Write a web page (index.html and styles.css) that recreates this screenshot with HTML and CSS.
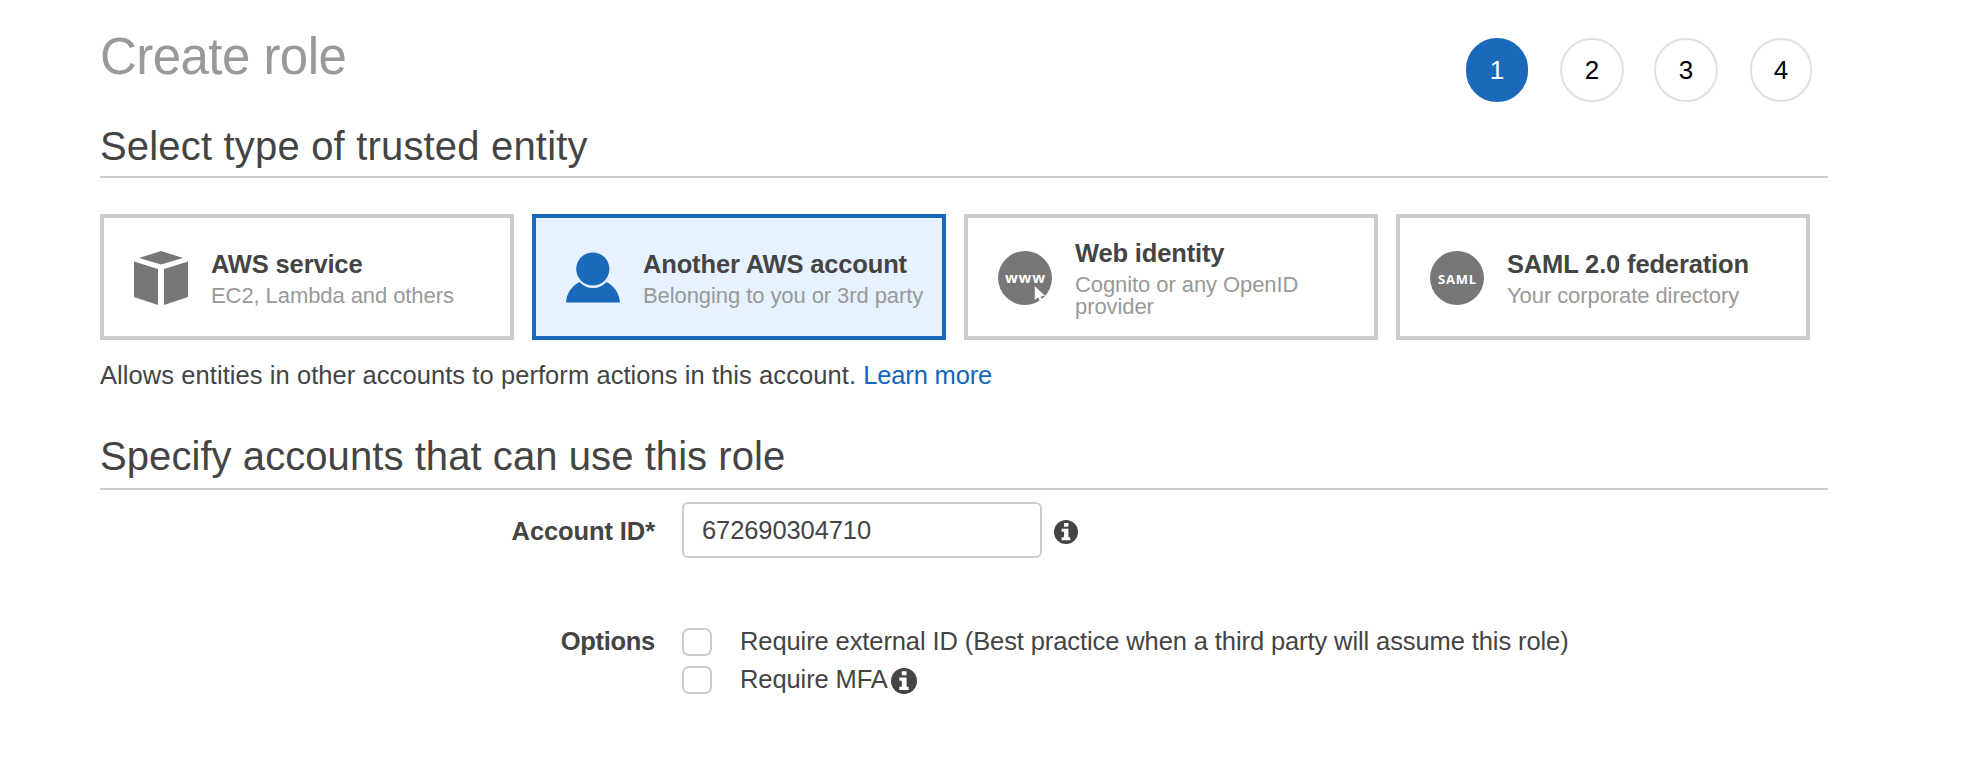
FILE: index.html
```html
<!DOCTYPE html>
<html lang="en">
<head>
<meta charset="utf-8">
<title>Create role</title>
<link rel="stylesheet" href="styles.css">
</head>
<body>
<svg class="defs" width="0" height="0" aria-hidden="true">
  <symbol id="info" viewBox="0 0 26 26">
    <circle cx="13" cy="13" r="13" fill="#444"/>
    <path fill="#fff" d="M10.800 3.200h4.800v4h-4.800zM8.300 9.400h7.300v9.300h2v3.300H8.300v-3.300h2.500v-6H8.300z"/>
  </symbol>
</svg>
<main class="wizard">
  <header class="header">
    <h1 class="title">Create role</h1>
    <ol class="steps">
      <li class="step step-active">1</li>
      <li class="step step-wide">2</li>
      <li class="step step-wide">3</li>
      <li class="step step-last">4</li>
    </ol>
  </header>

  <h2 class="section-title">Select type of trusted entity</h2>
  <div class="cards">
    <div class="card">
      <svg class="card-icon" viewBox="0 0 54 54" fill="#777">
        <path d="M27 0 49 7 27 13.500 5 7zM0 10.500l24 7.500v36L0 46zM54 10.500 30 18v36l24-8z"/>
      </svg>
      <div class="card-text">
        <h3 class="card-title">AWS service</h3>
        <p class="card-sub">EC2, Lambda and others</p>
      </div>
    </div>
    <div class="card card-selected">
      <svg class="card-icon" viewBox="0 0 54 54" fill="#1b69bb">
        <circle cx="26.800" cy="18" r="16.600"/>
        <path d="M0 51.600C.500 43 5.500 35 13.400 31c3.600 3.800 8.300 6.100 13.600 6.100S37 34.800 40.600 31C48.500 35 53.500 43 54 51.600z"/>
      </svg>
      <div class="card-text">
        <h3 class="card-title">Another AWS account</h3>
        <p class="card-sub">Belonging to you or 3rd party</p>
      </div>
    </div>
    <div class="card">
      <svg class="card-icon" viewBox="0 0 54 54">
        <circle cx="27" cy="27" r="27" fill="#777"/>
        <text class="badge-www" x="27" y="32" text-anchor="middle" textLength="40">www</text>
        <path fill="#fff" d="M36.800 35.300v13.700l3.200-2.700 2.300 4.700 2.400-1.200-2.200-4.400 4.500-.600z"/>
      </svg>
      <div class="card-text">
        <h3 class="card-title">Web identity</h3>
        <p class="card-sub">Cognito or any OpenID provider</p>
      </div>
    </div>
    <div class="card">
      <svg class="card-icon" viewBox="0 0 54 54">
        <circle cx="27" cy="27" r="27" fill="#777"/>
        <text class="badge-saml" x="27" y="33" text-anchor="middle" textLength="38">SAML</text>
      </svg>
      <div class="card-text">
        <h3 class="card-title">SAML 2.0 federation</h3>
        <p class="card-sub">Your corporate directory</p>
      </div>
    </div>
  </div>
  <p class="description">Allows entities in other accounts to perform actions in this account. <a class="link" href="#">Learn more</a></p>

  <h2 class="section-title section-accounts">Specify accounts that can use this role</h2>
  <form class="form">
    <label class="label label-account" for="account">Account ID*</label>
    <div class="field">
      <input class="input" id="account" type="text" value="672690304710">
      <svg class="info info-small"><use href="#info"/></svg>
    </div>
    <span class="label label-options">Options</span>
    <div class="options">
      <label class="option"><input class="check" type="checkbox"><span>Require external ID (Best practice when a third party will assume this role)</span></label>
      <label class="option"><input class="check" type="checkbox"><span>Require MFA</span><svg class="info"><use href="#info"/></svg></label>
    </div>
  </form>
</main>
</body>
</html>
```
FILE: styles.css
```css
* { box-sizing: border-box; }
body {
  margin: 0;
  background: #fff;
  color: #444;
  font-family: "Liberation Sans", Arial, sans-serif;
  font-size: 25.5px;
}
h1, h2, h3, p, ol { margin: 0; padding: 0; font-weight: normal; }
.defs { display: block; }
.wizard { width: 1728px; margin-left: 100px; }

.header {
  display: flex;
  justify-content: space-between;
  height: 122px;
  padding: 27px 16px 0 0;
}
.title {
  color: #999;
  font-size: 51px;
  line-height: 60px;
  letter-spacing: -0.55px;
}
.steps { display: flex; gap: 30px; list-style: none; padding-top: 11px; }
.step {
  width: 62px;
  height: 64px;
  border: 2px solid #e0e0e0;
  border-radius: 32px;
  color: #000;
  font-size: 26px;
  line-height: 61px;
  text-align: center;
}
.step-wide { width: 64px; }
.step-active { margin-right: 2px; background: #1b69bb; border-color: #1b69bb; color: #fff; }
.step-last { margin-left: 2px; }

.section-title {
  height: 56px;
  border-bottom: 2px solid #ccc;
  font-size: 40px;
  line-height: 48px;
  letter-spacing: 0.18px;
  white-space: nowrap;
}
.section-accounts { height: 58px; margin-top: 42px; letter-spacing: 0.07px; }

.cards { display: flex; gap: 18px; margin-top: 36px; }
.card {
  display: flex;
  align-items: center;
  gap: 23px;
  width: 414px;
  height: 126px;
  padding: 0 10px 0 30px;
  border: 4px solid #ccc;
}
.card-selected { background: #e6f2ff; border-color: #1b69bb; }
.card-icon { flex: none; width: 54px; height: 54px; margin-top: 2px; overflow: visible; }
.card-text { flex: 1; min-width: 0; padding-top: 2px; }
.card-title {
  font-weight: bold;
  font-size: 25.5px;
  line-height: 28px;
  letter-spacing: -0.15px;
  margin-bottom: 7px;
}
.card-sub { color: #999; font-size: 22px; line-height: 22px; letter-spacing: -0.08px; }
.card-selected .card-sub { white-space: nowrap; }
.badge-www { fill: #fff; font: bold 15px "Open Sans", sans-serif; }
.badge-saml { fill: #fff; font: bold 13px "Open Sans", sans-serif; }

.description { margin-top: 20px; line-height: 30px; letter-spacing: 0.07px; }
.link { color: #1166bb; text-decoration: none; letter-spacing: -0.15px; }

.form {
  display: grid;
  grid-template-columns: 555px 1fr;
  column-gap: 27px;
  row-gap: 70px;
  margin-top: 12px;
}
.label {
  font-weight: bold;
  letter-spacing: -0.1px;
  line-height: 26px;
  text-align: right;
}
.label-account { line-height: 58px; height: 56px; }
.label-options { letter-spacing: -0.3px; }
.field { display: flex; align-items: center; gap: 12px; }
.input {
  width: 360px;
  height: 56px;
  padding: 1px 18px 0;
  border: 2px solid #ccc;
  border-radius: 6px;
  color: #444;
  font: 25.5px "Liberation Sans", Arial, sans-serif;
  letter-spacing: -0.1px;
}
.info { width: 26px; height: 26px; }
.info-small { width: 24px; height: 24px; margin-top: 3px; }
.options { display: flex; flex-direction: column; gap: 10px; }
.option { display: flex; height: 28px; line-height: 26px; letter-spacing: -0.1px; white-space: nowrap; }
.option .info { margin: 2px 0 0 3px; }
.check {
  appearance: none;
  width: 30px;
  height: 28px;
  margin: 0 28px 0 0;
  border: 2px solid #ccc;
  border-radius: 7px;
  background: #fff;
}
```
